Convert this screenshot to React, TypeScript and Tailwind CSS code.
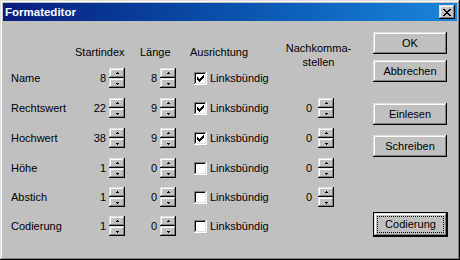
import React from "react";

const raised =
  "shadow-[inset_-1px_-1px_#000,inset_1px_1px_#dfdfdf,inset_-2px_-2px_#808080,inset_2px_2px_#fff]";

function Arrow({ up }: { up: boolean }) {
  return (
    <svg width="5" height="3" viewBox="0 0 5 3" shapeRendering="crispEdges">
      {up ? (
        <>
          <rect x="2" y="0" width="1" height="1" fill="#000" />
          <rect x="1" y="1" width="3" height="1" fill="#000" />
        </>
      ) : (
        <>
          <rect x="1" y="1" width="3" height="1" fill="#000" />
          <rect x="2" y="2" width="1" height="1" fill="#000" />
        </>
      )}
    </svg>
  );
}

function Spin({ extra = "" }: { extra?: string }) {
  return (
    <div className={`flex flex-col w-[16px] h-[20px] ${extra}`}>
      <div className={`h-[10px] bg-[#c0c0c0] flex items-center justify-center ${raised}`}>
        <Arrow up />
      </div>
      <div className={`h-[10px] bg-[#c0c0c0] flex items-center justify-center ${raised}`}>
        <Arrow up={false} />
      </div>
    </div>
  );
}

function CheckBox({ checked }: { checked: boolean }) {
  const pix = [
    [6, 0],
    [5, 1], [6, 1],
    [0, 2], [4, 2], [5, 2], [6, 2],
    [0, 3], [1, 3], [3, 3], [4, 3], [5, 3],
    [0, 4], [1, 4], [2, 4], [3, 4], [4, 4],
    [1, 5], [2, 5], [3, 5],
    [2, 6],
  ];
  return (
    <div className="w-[13px] h-[13px] bg-white shadow-[inset_-1px_-1px_#fff,inset_1px_1px_#808080,inset_-2px_-2px_#dfdfdf,inset_2px_2px_#000] flex items-center justify-center">
      {checked && (
        <svg width="7" height="7" viewBox="0 0 7 7" shapeRendering="crispEdges">
          {pix.map(([x, y], i) => (
            <rect key={i} x={x} y={y} width="1" height="1" fill="#000" />
          ))}
        </svg>
      )}
    </div>
  );
}

function Btn({ label, extra = "" }: { label: string; extra?: string }) {
  return (
    <div
      className={`w-[74px] h-[22px] bg-[#c0c0c0] flex items-center justify-center ${raised} ${extra}`}
    >
      {label}
    </div>
  );
}

type Row = {
  label: string;
  a: string;
  b: string;
  checked: boolean;
  c?: string;
  mt: string;
};

const rows: Row[] = [
  { label: "Name", a: "8", b: "8", checked: true, mt: "mt-0" },
  { label: "Rechtswert", a: "22", b: "9", checked: true, c: "0", mt: "mt-[10px]" },
  { label: "Hochwert", a: "38", b: "9", checked: true, c: "0", mt: "mt-[10px]" },
  { label: "Höhe", a: "1", b: "0", checked: false, c: "0", mt: "mt-[10px]" },
  { label: "Abstich", a: "1", b: "0", checked: false, c: "0", mt: "mt-[9px]" },
  { label: "Codierung", a: "1", b: "0", checked: false, mt: "mt-[9px]" },
];

export default function App() {
  return (
    <div
      className="w-[460px] h-[260px] bg-[#c0c0c0] p-[3px] flex flex-col text-[11px] text-black leading-[13px] shadow-[inset_-1px_-1px_#000,inset_1px_1px_#dfdfdf,inset_-2px_-2px_#808080,inset_2px_2px_#fff]"
      style={{ fontFamily: '"Liberation Sans", Arial, sans-serif' }}
    >
      {/* Title bar */}
      <div className="h-[18px] flex items-center justify-between pl-[2px] pr-[2px] bg-gradient-to-r from-[#0a1c7e] to-[#1a86dc]">
        <span className="text-white font-bold text-[11.5px]">Formateditor</span>
        <div className={`w-[16px] h-[14px] bg-[#c0c0c0] flex items-center justify-center ${raised}`}>
          <svg width="8" height="7" viewBox="0 0 8 7" shapeRendering="crispEdges">
            <path d="M0 0h2v1H0zM6 0h2v1H6zM1 1h2v1H1zM5 1h2v1H5zM2 2h4v1H2zM3 3h2v1H3zM2 4h4v1H2zM1 5h2v1H1zM5 5h2v1H5zM0 6h2v1H0zM6 6h2v1H6z" fill="#000" />
          </svg>
        </div>
      </div>

      <div className="flex flex-1">
        {/* Left area */}
        <div className="w-[370px] pl-[8px] pt-[20px] flex flex-col">
          <div className="flex h-[27px] items-start">
            <div className="w-[64px]" />
            <div className="w-[65px] mt-[5px]">Startindex</div>
            <div className="w-[50px] mt-[5px]">Länge</div>
            <div className="w-[95px] mt-[5px]">Ausrichtung</div>
            <div className="w-[67px] text-center leading-[14px]">
              Nachkomma-
              <br />
              stellen
            </div>
          </div>
          {rows.map((r) => (
            <div key={r.label} className={`flex items-center h-[20px] ${r.mt}`}>
              <div className="w-[74px]">{r.label}</div>
              <div className="w-[21px] text-right">{r.a}</div>
              <Spin extra="ml-[3px]" />
              <div className="w-[32px] text-right">{r.b}</div>
              <Spin extra="ml-[3px]" />
              <div className="ml-[18px]">
                <CheckBox checked={r.checked} />
              </div>
              <div className="ml-[3px] w-[58px]">Linksbündig</div>
              {r.c !== undefined && (
                <>
                  <div className="w-[44px] text-right">{r.c}</div>
                  <Spin extra="ml-[6px]" />
                </>
              )}
            </div>
          ))}
        </div>

        {/* Right buttons */}
        <div className="flex flex-col">
          <Btn label="OK" extra="mt-[11px]" />
          <Btn label="Abbrechen" extra="mt-[6px]" />
          <Btn label="Einlesen" extra="mt-[21px]" />
          <Btn label="Schreiben" extra="mt-[10px]" />
          <div className="mt-[55px] w-[75px] h-[25px] border border-black bg-[#c0c0c0] flex">
            <div className={`flex-1 flex p-[3px] ${raised}`}>
              <div className="flex-1 border border-dotted border-black flex items-center justify-center">
                Codierung
              </div>
            </div>
          </div>
        </div>
      </div>
    </div>
  );
}
